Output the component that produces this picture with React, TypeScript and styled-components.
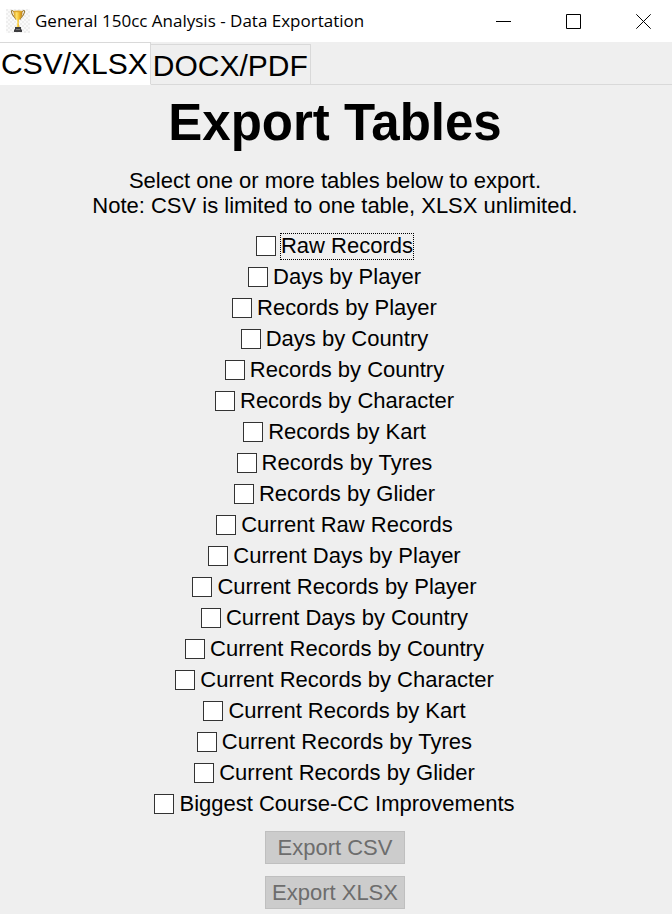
import React, { useEffect, useRef, useState } from "react";
import styled, { createGlobalStyle } from "styled-components";

const GlobalStyle = createGlobalStyle`
  *, *::before, *::after { box-sizing: border-box; }
  body {
    margin: 0;
    background: #efefef;
    color: #000;
    font-family: "Liberation Sans", Arial, sans-serif;
    font-size: 22px;
  }
`;

const Window = styled.div`
  display: flex;
  flex-direction: column;
  min-height: 100vh;
  background: #efefef;
`;

const TitleBar = styled.header`
  display: flex;
  align-items: center;
  height: 42px;
  padding-left: 6px;
  background: #fff;
`;

const WindowTitle = styled.span`
  flex: 1;
  min-width: 0;
  margin-left: 5px;
  overflow: hidden;
  white-space: nowrap;
  font-family: "Open Sans", "Noto Sans", sans-serif;
  font-size: 17px;
  line-height: 24px;
`;

const WindowControls = styled.div`
  display: flex;
  gap: 13px;
`;

const ControlButton = styled.button`
  display: flex;
  align-items: center;
  justify-content: center;
  width: 57px;
  height: 40px;
  padding: 0;
  border: 0;
  background: transparent;
`;

const TabBar = styled.div`
  display: flex;
  align-items: flex-end;
  height: 43px;
  box-shadow: inset 0 -1px #d9d9d9;
`;

const Tab = styled.button<{ $active: boolean }>`
  height: ${(p) => (p.$active ? 43 : 41)}px;
  padding: ${(p) => (p.$active ? "0 2px 0 1px" : "2px 2px 0 2px")};
  border: 1px solid #d9d9d9;
  border-left-width: 0;
  border-bottom-color: ${(p) => (p.$active ? "#fff" : "#d9d9d9")};
  background: ${(p) => (p.$active ? "#fff" : "#efefef")};
  color: #000;
  font-family: inherit;
  font-size: 30px;
  line-height: 36px;
  white-space: nowrap;
`;

const Panel = styled.main`
  display: flex;
  flex-direction: column;
  align-items: center;
  padding: 9px 2px 5px 0;
`;

const Heading = styled.h1`
  margin: 0;
  font-size: 51px;
  font-weight: bold;
  line-height: 58px;
`;

const Note = styled.p`
  margin: 16px 0 13px;
  line-height: 25px;
  text-align: center;
`;

const TableList = styled.div`
  display: flex;
  flex-direction: column;
  align-items: center;
  gap: 4px;
  padding-top: 2px;
`;

const Option = styled.label`
  display: flex;
  align-items: flex-start;
  gap: 4px;
  height: 27px;
`;

const OptionText = styled.span`
  padding-bottom: 2px;
  border: 1px solid transparent;
  line-height: 23px;
`;

const CheckBox = styled.input`
  appearance: none;
  width: 20px;
  height: 20px;
  margin: 3px 0 0;
  border: 1px solid #333;
  background: #fff;
  outline: none;

  &:checked {
    box-shadow: inset 0 0 0 4px #fff;
    background: #333;
  }

  &:focus + ${OptionText} {
    border: 1px dotted #000;
  }
`;

const Actions = styled.div`
  display: grid;
  gap: 12px;
  min-width: 140px;
  margin-top: 13px;
`;

const ExportButton = styled.button`
  height: 33px;
  padding: 0 6px;
  border: 1px solid #bfbfbf;
  background: #ccc;
  color: #000;
  font-family: inherit;
  font-size: 22px;
  line-height: 25px;

  &:disabled {
    color: #6d6d6d;
  }
`;

const tables = [
  "Raw Records",
  "Days by Player",
  "Records by Player",
  "Days by Country",
  "Records by Country",
  "Records by Character",
  "Records by Kart",
  "Records by Tyres",
  "Records by Glider",
  "Current Raw Records",
  "Current Days by Player",
  "Current Records by Player",
  "Current Days by Country",
  "Current Records by Country",
  "Current Records by Character",
  "Current Records by Kart",
  "Current Records by Tyres",
  "Current Records by Glider",
  "Biggest Course-CC Improvements",
];

const TrophyIcon = () => (
  <svg width="24" height="24" viewBox="0 0 24 24" aria-hidden="true">
    <defs>
      <pattern id="checks" width="4" height="4" patternUnits="userSpaceOnUse">
        <path d="M0 0h4v4H0z" fill="#fafafa" />
        <path d="M0 0h2v2H0zM2 2h2v2H2z" fill="#eee" />
      </pattern>
      <linearGradient id="gold">
        <stop offset="0" stopColor="#d99a1c" />
        <stop offset="0.35" stopColor="#ffe36b" />
        <stop offset="0.6" stopColor="#f4bd2b" />
        <stop offset="1" stopColor="#b87b17" />
      </linearGradient>
    </defs>
    <path d="M0 0h24v24H0z" fill="url(#checks)" />
    <path
      d="M8 3C6 .5 4.500 1.500 6 4.500C6.500 7 9 7.500 10 10.500M16 3C18 .5 19.500 1.500 18 4.500C17.500 7 15 7.500 14 10.500"
      fill="none"
      stroke="#94742f"
      strokeWidth="1.1"
    />
    <path
      d="M7.500 2h9c0 4.500-1 7-3.500 9l-.3 3 .8 4h-3l.8-4-.3-3C8.500 9 7.500 6.500 7.500 2z"
      fill="url(#gold)"
    />
    <ellipse cx="12" cy="2.300" rx="4.500" ry="0.900" fill="#dca52c" />
    <path d="M9 18h6v2.500h1V23H8v-2.500h1z" fill="#3d3d40" />
    <path d="M10 20h4v1h-4z" fill="#77777a" />
  </svg>
);

const controls = [
  { name: "Minimize", path: "M0 7.5h15" },
  { name: "Maximize", path: "M.5.5h14v14H.5z" },
  { name: "Close", path: "M.3.3l14.400 14.400M14.700.3L.3 14.700" },
];

export default function App() {
  const [tab, setTab] = useState("CSV/XLSX");
  const [selected, setSelected] = useState<string[]>([]);
  const first = useRef<HTMLInputElement>(null);

  useEffect(() => first.current?.focus(), []);

  const toggle = (name: string) =>
    setSelected((s) => (s.includes(name) ? s.filter((n) => n !== name) : [...s, name]));

  return (
    <Window>
      <GlobalStyle />
      <TitleBar>
        <TrophyIcon />
        <WindowTitle>General 150cc Analysis - Data Exportation</WindowTitle>
        <WindowControls>
          {controls.map((c) => (
            <ControlButton key={c.name} type="button" aria-label={c.name}>
              <svg width="15" height="15" viewBox="0 0 15 15" fill="none" stroke="#000">
                <path d={c.path} />
              </svg>
            </ControlButton>
          ))}
        </WindowControls>
      </TitleBar>
      <TabBar role="tablist">
        {["CSV/XLSX", "DOCX/PDF"].map((name) => (
          <Tab
            key={name}
            type="button"
            role="tab"
            aria-selected={tab === name}
            $active={tab === name}
            onClick={() => setTab(name)}
          >
            {name}
          </Tab>
        ))}
      </TabBar>
      <Panel>
        <Heading>Export Tables</Heading>
        <Note>
          Select one or more tables below to export.
          <br />
          Note: CSV is limited to one table, XLSX unlimited.
        </Note>
        <TableList>
          {tables.map((name, i) => (
            <Option key={name}>
              <CheckBox
                ref={i === 0 ? first : undefined}
                type="checkbox"
                checked={selected.includes(name)}
                onChange={() => toggle(name)}
              />
              <OptionText>{name}</OptionText>
            </Option>
          ))}
        </TableList>
        <Actions>
          <ExportButton type="button" disabled={selected.length !== 1}>
            Export CSV
          </ExportButton>
          <ExportButton type="button" disabled={selected.length === 0}>
            Export XLSX
          </ExportButton>
        </Actions>
      </Panel>
    </Window>
  );
}
